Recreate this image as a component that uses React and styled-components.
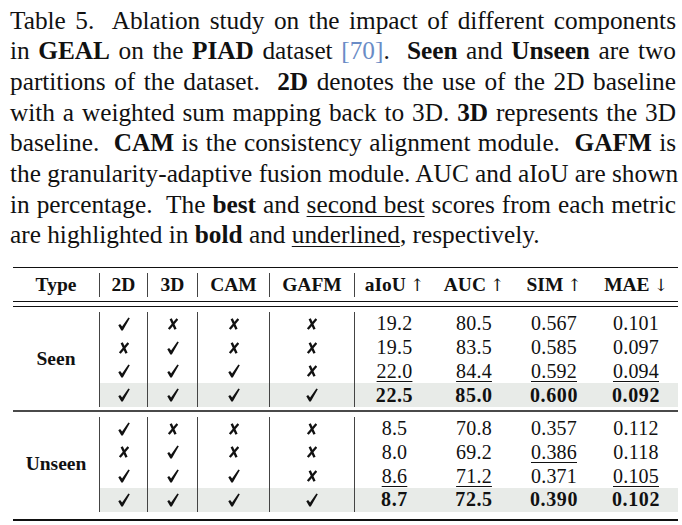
import React from 'react';
import styled, { createGlobalStyle } from 'styled-components';

const GlobalStyle = createGlobalStyle`
  body {
    margin: 0;
    background: #ffffff;
  }
`;

const COLS = '86px 48px 50px 72px 85px 80px 80px 80px 84px';

const seen = [
  { m: [1, 0, 0, 0], v: ['19.2', '80.5', '0.567', '0.101'] },
  { m: [0, 1, 0, 0], v: ['19.5', '83.5', '0.585', '0.097'] },
  { m: [1, 1, 1, 0], v: ['22.0', '84.4', '0.592', '0.094'], u: [1, 1, 1, 1] },
  { m: [1, 1, 1, 1], v: ['22.5', '85.0', '0.600', '0.092'], best: true },
];

const unseen = [
  { m: [1, 0, 0, 0], v: ['8.5', '70.8', '0.357', '0.112'] },
  { m: [0, 1, 0, 0], v: ['8.0', '69.2', '0.386', '0.118'], u: [0, 0, 1, 0] },
  { m: [1, 1, 1, 0], v: ['8.6', '71.2', '0.371', '0.105'], u: [1, 1, 0, 1] },
  { m: [1, 1, 1, 1], v: ['8.7', '72.5', '0.390', '0.102'], best: true },
];

// dingbat style check / ballot x
const CheckIcon = () => (
  <svg width="12" height="14" viewBox="0 0 12 14">
    <path
      d="M0.3 8.3 L2.1 6.9 L4.1 9.6 L10.4 0.4 L11.8 1.3 L4.8 13.6 L3.3 13.6 Z"
      fill="#111"
    />
  </svg>
);

const CrossIcon = () => (
  <svg width="10" height="12" viewBox="0 0 10 12">
    <path
      d="M2.7 0.8 L7.5 11.2 M9.4 0.9 L0.8 11.1"
      stroke="#111"
      strokeWidth="2.4"
      fill="none"
    />
  </svg>
);

const App = () => {
  return (
    <Page>
      <GlobalStyle />
      <Caption>
        <Line>Table 5.&nbsp; Ablation study on the impact of different components</Line>
        <Line>
          in <b>GEAL</b> on the <b>PIAD</b> dataset <Cite>[70]</Cite>.&nbsp; <b>Seen</b> and{' '}
          <b>Unseen</b> are two
        </Line>
        <Line>
          partitions of the dataset.&nbsp; <b>2D</b> denotes the use of the 2D baseline
        </Line>
        <Line>
          with a weighted sum mapping back to 3D. <b>3D</b> represents the 3D
        </Line>
        <Line>
          baseline.&nbsp; <b>CAM</b> is the consistency alignment module.&nbsp; <b>GAFM</b> is
        </Line>
        <Line>the granularity-adaptive fusion module. AUC and aIoU are shown</Line>
        <Line>
          in percentage.&nbsp; The <b>best</b> and <u>second best</u> scores from each metric
        </Line>
        <LastLine>
          are highlighted in <b>bold</b> and <u>underlined</u>, respectively.
        </LastLine>
      </Caption>

      <Table>
        <Rule $w={1.6} />
        <HeadGrid>
          <Head>Type</Head>
          <Head $sep>2D</Head>
          <Head $sep>3D</Head>
          <Head $sep>CAM</Head>
          <Head $sep>GAFM</Head>
          <Head $sep>
            aIoU <Arrow>↑</Arrow>
          </Head>
          <Head>
            AUC <Arrow>↑</Arrow>
          </Head>
          <Head>
            SIM <Arrow>↑</Arrow>
          </Head>
          <Head>
            MAE <Arrow>↓</Arrow>
          </Head>
        </HeadGrid>
        <DoubleRule>
          <Rule $w={1.1} />
          <Rule $w={1.1} />
        </DoubleRule>
        <Block name="Seen" rows={seen} />
        <Rule $w={1.3} $c="#4a4a4a" />
        <Block name="Unseen" rows={unseen} />
        <Rule $w={1.8} $end />
      </Table>
    </Page>
  );
};

const Block = ({ name, rows }) => (
  <BodyGrid>
    <TypeCell>{name}</TypeCell>
    {rows.map((row, r) => (
      <React.Fragment key={r}>
        {row.m.map((on, i) => (
          <Mark key={'m' + i} $sep $hl={row.best}>
            {on ? <CheckIcon /> : <CrossIcon />}
          </Mark>
        ))}
        {row.v.map((val, i) => (
          <Num key={'v' + i} $sep={i === 0} $hl={row.best} $bold={row.best}>
            <NumText $ul={row.u && row.u[i]}>{val}</NumText>
          </Num>
        ))}
      </React.Fragment>
    ))}
  </BodyGrid>
);

export default App;

const Page = styled.div`
  width: 682px;
  height: 525px;
  overflow: hidden;
  padding-top: 4.5px;
  box-sizing: border-box;
`;

const Caption = styled.div`
  padding: 0 6px 0 10px;
  font-family: 'Liberation Serif', 'Times New Roman', serif;
  font-size: 25.3px;
  line-height: 30.7px;
  color: #111;

  b {
    font-weight: 700;
  }

  u {
    text-decoration-thickness: 1px;
    text-underline-offset: 3px;
  }
`;

const Line = styled.div`
  text-align: justify;
  text-align-last: justify;
  white-space: nowrap;
`;

const LastLine = styled.div`
  text-align: left;
  white-space: nowrap;
`;

const Cite = styled.span`
  color: #6a8cc6;
`;

const Table = styled.div`
  margin: 16.5px 4px 0 13px;
  display: flex;
  flex-direction: column;
  font-family: 'Liberation Serif', 'Times New Roman', serif;
  color: #111;
`;

const Rule = styled.div`
  height: ${p => p.$w}px;
  background: ${p => p.$c || '#111'};
  margin: ${p => (p.$end ? '3.5px 0 0' : '0')};
`;

const DoubleRule = styled.div`
  display: flex;
  flex-direction: column;
  gap: 4px;
  margin: 3.5px 0 5px;
`;

const HeadGrid = styled.div`
  display: grid;
  grid-template-columns: ${COLS};
  grid-auto-rows: 24px;
  margin-top: 5px;
`;

const Head = styled.div`
  display: flex;
  align-items: center;
  justify-content: center;
  font-size: 19.5px;
  font-weight: 700;
  border-left: ${p => (p.$sep ? '1.2px solid #444' : 'none')};
  white-space: nowrap;
`;

const Arrow = styled.span`
  font-family: 'DejaVu Serif', serif;
  font-weight: 400;
  font-size: 17px;
  margin-left: 4px;
`;

const BodyGrid = styled.div`
  display: grid;
  grid-template-columns: ${COLS};
  grid-auto-rows: 23.75px;
  margin-bottom: 3.5px;

  & + div {
    margin-bottom: 5px;
  }
`;

const TypeCell = styled.div`
  grid-row: span 4;
  display: flex;
  align-items: center;
  justify-content: center;
  font-size: 19.5px;
  font-weight: 700;
`;

const Cell = styled.div`
  display: flex;
  align-items: center;
  justify-content: center;
  border-left: ${p => (p.$sep ? '1.2px solid #444' : 'none')};
  background: ${p => (p.$hl ? '#e8ebe8' : 'transparent')};
`;

const Mark = styled(Cell)`
  svg {
    display: block;
  }
`;

const Num = styled(Cell)`
  font-size: 20px;
  font-weight: ${p => (p.$bold ? 700 : 400)};
  letter-spacing: ${p => (p.$bold ? '0.6px' : '0.2px')};
`;

const NumText = styled.span`
  text-decoration: ${p => (p.$ul ? 'underline' : 'none')};
  text-decoration-thickness: 1px;
  text-underline-offset: 3px;
`;
